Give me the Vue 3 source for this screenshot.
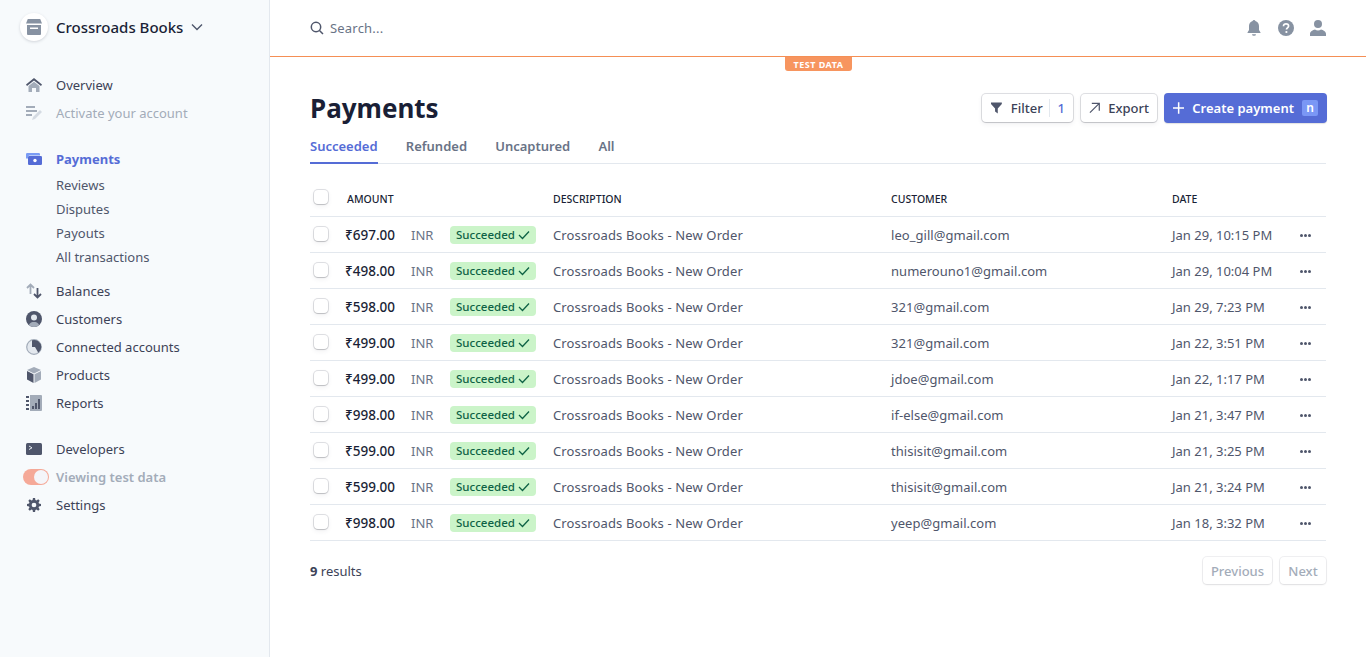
<script setup>
const rows = [
  ['₹697.00', 'leo_gill@gmail.com', 'Jan 29, 10:15 PM'],
  ['₹498.00', 'numerouno1@gmail.com', 'Jan 29, 10:04 PM'],
  ['₹598.00', '321@gmail.com', 'Jan 29, 7:23 PM'],
  ['₹499.00', '321@gmail.com', 'Jan 22, 3:51 PM'],
  ['₹499.00', 'jdoe@gmail.com', 'Jan 22, 1:17 PM'],
  ['₹998.00', 'if-else@gmail.com', 'Jan 21, 3:47 PM'],
  ['₹599.00', 'thisisit@gmail.com', 'Jan 21, 3:25 PM'],
  ['₹599.00', 'thisisit@gmail.com', 'Jan 21, 3:24 PM'],
  ['₹998.00', 'yeep@gmail.com', 'Jan 18, 3:32 PM'],
]
</script>

<template>
  <div class="app">
    <aside class="side">
      <div class="brand">
        <span class="logo">
          <svg width="16" height="16" viewBox="0 0 16 16"><path d="M1.800 0h12.400L16 4.500H0z" fill="#8792a2"/><path d="M1 6h14v9a1 1 0 0 1-1 1H2a1 1 0 0 1-1-1z" fill="#8792a2"/><path d="M4 8.500h8V10H4z" fill="#fff"/></svg>
        </span>
        <span class="brand-name">Crossroads Books</span>
        <svg width="12" height="8" viewBox="0 0 12 8" class="chev"><path d="M1 1.500l5 5 5-5" fill="none" stroke="#4f566b" stroke-width="1.400"/></svg>
      </div>

      <nav class="group g1">
        <div class="item"><span class="ic"><svg width="16" height="16" viewBox="0 0 16 16"><path d="M8 1L0 7.500 1 9l7-5.500L15 9l1-1.500z" fill="#4f566b"/><path d="M2.500 9L8 4.700 13.500 9v6H10v-4H6v4H2.500z" fill="#a3acb9"/></svg></span><span>Overview</span></div>
        <div class="item off"><span class="ic"><svg width="16" height="16" viewBox="0 0 16 16"><path d="M0 1h9v2H0zM0 5h11v2H0zM0 9h6v2H0z" fill="#a3acb9"/><path d="M6 15l1-3 7-7 2 2-7 7z" fill="#d5dbe3"/></svg></span><span>Activate your account</span></div>
      </nav>

      <nav class="group g2">
        <div class="item active"><span class="ic"><svg width="16" height="12" viewBox="0 0 16 12"><path d="M0 1.200Q0 0 1.200 0H12.800Q14 0 14 1.200V2.500H3.500Q2 2.500 2 4V5.500H0z" fill="#7a9cf5"/><path d="M2 4.200Q2 3 3.200 3h11.600Q16 3 16 4.200v6.600Q16 12 14.800 12H3.200Q2 12 2 10.800z" fill="#556cd6"/><circle cx="9" cy="7.500" r="1.700" fill="#fff"/></svg></span><span>Payments</span></div>
        <div class="sub">Reviews</div>
        <div class="sub">Disputes</div>
        <div class="sub">Payouts</div>
        <div class="sub">All transactions</div>
      </nav>

      <nav class="group g3">
        <div class="item"><span class="ic"><svg width="16" height="16" viewBox="0 0 16 16"><path d="M4.500 11V1.500M1 5l3.500-3.500L8 5" fill="none" stroke="#a3acb9" stroke-width="1.800"/><path d="M11.500 5v9.500M8 11l3.500 3.500L15 11" fill="none" stroke="#4f566b" stroke-width="1.800"/></svg></span><span>Balances</span></div>
        <div class="item"><span class="ic"><svg width="16" height="16" viewBox="0 0 16 16"><circle cx="8" cy="8" r="8" fill="#4f566b"/><path d="M2.800 14C4 11.500 6 11 8 11s4 .5 5.200 3A8 8 0 0 1 2.800 14z" fill="#a3acb9"/><circle cx="8" cy="6.500" r="3" fill="#e3e8ee"/></svg></span><span>Customers</span></div>
        <div class="item"><span class="ic"><svg width="16" height="16" viewBox="0 0 16 16"><circle cx="8" cy="8" r="7.300" fill="#e3e8ee" stroke="#a3acb9" stroke-width="1.200"/><path d="M6 1.200A7.300 7.300 0 0 1 15.300 8a7.300 7.300 0 0 1-3 5.800L9 8H6z" fill="#4f566b"/></svg></span><span>Connected accounts</span></div>
        <div class="item"><span class="ic"><svg width="16" height="16" viewBox="0 0 16 16"><path d="M8 0l7 3-7 3.500L1 3z" fill="#a3acb9"/><path d="M1 4l6.500 3.300V16L1 12.500z" fill="#4f566b"/><path d="M15 4L8.500 7.300V16l6.500-3.500z" fill="#a3acb9"/></svg></span><span>Products</span></div>
        <div class="item"><span class="ic"><svg width="16" height="16" viewBox="0 0 16 16"><path d="M4 0h11a1 1 0 0 1 1 1v14a1 1 0 0 1-1 1H4z" fill="#a3acb9"/><path d="M0 1h3v2H0zM0 5h3v2H0zM0 9h3v2H0zM0 13h3v2H0z" fill="#4f566b"/><path d="M6 11h2v3H6zM9 8h2v6H9zM12 4h2v10h-2z" fill="#4f566b"/></svg></span><span>Reports</span></div>
      </nav>

      <nav class="group g4">
        <div class="item"><span class="ic"><svg width="16" height="12" viewBox="0 0 16 12"><rect width="16" height="12" rx="1.500" fill="#4f566b"/><path d="M3 3l3 1.800L3 6.500" fill="none" stroke="#e3e8ee" stroke-width="1"/></svg></span><span>Developers</span></div>
        <div class="item toggle-row"><span class="toggle"><span class="knob"></span></span><span>Viewing test data</span></div>
        <div class="item"><span class="ic"><svg width="14" height="14" viewBox="0 0 16 16"><path fill-rule="evenodd" d="M6.800 0h2.400l.4 2.300 1.300.5 1.900-1.300 1.700 1.700-1.300 1.900.5 1.300 2.300.4v2.400l-2.300.4-.5 1.300 1.300 1.900-1.700 1.700-1.900-1.300-1.300.5-.4 2.300H6.800l-.4-2.300-1.300-.5-1.900 1.300-1.700-1.700 1.300-1.900-.5-1.300L0 9.200V6.800l2.300-.4.500-1.300-1.300-1.900 1.700-1.700 1.900 1.300 1.300-.5zM8 5.300a2.700 2.700 0 1 0 0 5.400 2.700 2.700 0 0 0 0-5.400z" fill="#4f566b"/></svg></span><span>Settings</span></div>
      </nav>
    </aside>

    <div class="content">
      <header class="top">
        <div class="search">
          <svg width="14" height="14" viewBox="0 0 14 14"><circle cx="6" cy="6" r="4.700" fill="none" stroke="#4f566b" stroke-width="1.500"/><path d="M9.500 9.500L13 13" stroke="#4f566b" stroke-width="1.500"/></svg>
          <span>Search...</span>
        </div>
        <div class="top-icons">
          <svg width="16" height="16" viewBox="0 0 16 16"><path d="M8 0a1.500 1.500 0 0 1 1.400 1.100C11.500 1.700 13 3.500 13 6v4l1.500 2.500v.5h-13v-.5L3 10V6c0-2.500 1.500-4.300 3.600-4.900A1.500 1.500 0 0 1 8 0zM6 14.200h4a2 1.600 0 0 1-4 0z" fill="#8792a2"/></svg>
          <svg width="16" height="16" viewBox="0 0 16 16"><circle cx="8" cy="8" r="8" fill="#8792a2"/><path d="M5.500 6.200C5.500 4.700 6.600 3.800 8 3.800s2.600.8 2.600 2.200c0 1.800-2.100 1.900-2.100 3.400" fill="none" stroke="#fff" stroke-width="1.700"/><circle cx="8.400" cy="12" r="1.100" fill="#fff"/></svg>
          <svg width="16" height="16" viewBox="0 0 16 16"><circle cx="8" cy="4" r="4" fill="#8792a2"/><path d="M0 16v-2c0-2.500 3-4 5-4.500 1.500 1.200 4.500 1.200 6 0 2 .5 5 2 5 4.500v2z" fill="#8792a2"/></svg>
        </div>
      </header>
      <div class="test-wrap"><span class="test">TEST DATA</span></div>

      <main class="main">
        <div class="head">
          <h1>Payments</h1>
          <div class="actions">
            <button class="btn filter">
              <svg width="12" height="12" viewBox="0 0 12 12"><path d="M0 0h12v1.500L7.500 6.500V12L4.500 10V6.500L0 1.500z" fill="#4f566b"/></svg>
              <span class="f-label">Filter</span><span class="sep"></span><span class="one">1</span>
            </button>
            <button class="btn export">
              <svg width="12" height="12" viewBox="0 0 12 12"><path d="M1 11L11 1M3 1h8v8" fill="none" stroke="#4f566b" stroke-width="1.300"/></svg>
              <span>Export</span>
            </button>
            <button class="btn create">
              <svg width="12" height="12" viewBox="0 0 12 12"><path d="M6 0v12M0 6h12" stroke="#fff" stroke-width="1.600"/></svg>
              <span class="c-label">Create payment</span><span class="key">n</span>
            </button>
          </div>
        </div>

        <div class="tabs">
          <span class="tab on">Succeeded</span>
          <span class="tab">Refunded</span>
          <span class="tab">Uncaptured</span>
          <span class="tab">All</span>
        </div>

        <div class="row hdr">
          <span class="cb"></span>
          <span class="c-amt hamt">AMOUNT</span>
          <span class="c-cur"></span>
          <span class="c-st"></span>
          <span class="c-desc">DESCRIPTION</span>
          <span class="c-cust">CUSTOMER</span>
          <span class="c-date">DATE</span>
          <span class="c-more"></span>
        </div>
        <div class="row body-row" v-for="(r, i) in rows" :key="i">
          <span class="cb"></span>
          <span class="c-amt amt">{{ r[0] }}</span>
          <span class="c-cur cur">INR</span>
          <span class="c-st"><span class="pill">Succeeded<svg width="12" height="10" viewBox="0 0 12 10"><path d="M1 5l3.500 3.500L11 1.500" fill="none" stroke="#0e6245" stroke-width="1.300"/></svg></span></span>
          <span class="c-desc">Crossroads Books - New Order</span>
          <span class="c-cust">{{ r[1] }}</span>
          <span class="c-date">{{ r[2] }}</span>
          <span class="c-more"><i></i><i></i><i></i></span>
        </div>

        <div class="foot">
          <span class="count"><b>9</b> results</span>
          <div class="pager">
            <button class="btn dis prev">Previous</button>
            <button class="btn dis next">Next</button>
          </div>
        </div>
      </main>
    </div>
  </div>
</template>

<style>
html, body { margin: 0; background: #fff; overflow: hidden; }
</style>

<style scoped>
.app { display: flex; height: 657px; font-family: "Noto Sans", "Open Sans", "Liberation Sans", sans-serif; font-size: 13px; color: #3c4257; }
.side { width: 269px; flex: none; background: #f7fafc; border-right: 1px solid #e3e8ee; padding-top: 13px; }
.brand { display: flex; align-items: center; padding-left: 20px; height: 28px; }
.logo { width: 28px; height: 28px; border-radius: 50%; background: #fff; box-shadow: 0 1px 3px rgba(60,66,87,.2); display: flex; align-items: center; justify-content: center; }
.brand-name { margin-left: 8px; font-size: 15px; font-weight: 500; color: #1a1f36; }
.chev { margin-left: 8px; }
.group { display: flex; flex-direction: column; }
.g1 { margin-top: 30px; }
.g2 { margin-top: 18px; }
.g3 { margin-top: 8px; }
.g4 { margin-top: 18px; }
.item { display: flex; align-items: center; height: 28px; color: #3c4257; }
.ic { width: 16px; margin-left: 26px; margin-right: 14px; display: flex; justify-content: center; }
.off { color: #a3acb9; }
.active { color: #556cd6; font-weight: 700; }
.sub { height: 24px; line-height: 24px; padding-left: 56px; color: #4f566b; }
.toggle-row { color: #a3acb9; font-weight: 600; }
.toggle { width: 26px; height: 16px; margin-left: 23px; margin-right: 7px; border-radius: 8px; background: #f5a998; display: flex; align-items: center; justify-content: flex-end; padding-right: 1px; box-sizing: border-box; }
.knob { width: 14px; height: 14px; border-radius: 50%; background: #f4f5f9; }

.content { flex: 1; min-width: 0; display: flex; flex-direction: column; }
.top { height: 56px; border-bottom: 1px solid #f58f55; display: flex; align-items: center; justify-content: space-between; padding: 0 40px; flex: none; }
.search { display: flex; align-items: center; gap: 6px; color: #697386; letter-spacing: .2px; }
.top-icons { display: flex; gap: 16px; }
.test-wrap { height: 0; position: relative; }
.test { position: absolute; top: 0; left: 515px; width: 67px; height: 14px; background: #f7955f; color: #fff; font-size: 9px; font-weight: 700; line-height: 15px; text-align: center; border-radius: 0 0 3px 3px; letter-spacing: .5px; }

.main { padding: 35px 40px 0 40px; }
.head { display: flex; justify-content: space-between; align-items: center; height: 32px; }
h1 { margin: 0; font-size: 26px; font-weight: 700; color: #1a1f36; line-height: 32px; }
.actions { display: flex; align-items: center; margin-right: -1px; }
.btn { font: inherit; font-weight: 500; display: inline-flex; align-items: center; height: 28px; border: 0; border-radius: 4px; background: #fff; color: #3c4257; box-shadow: 0 0 0 1px rgba(60,66,87,.16), 0 1px 1px rgba(0,0,0,.1), 0 2px 5px rgba(60,66,87,.08); padding: 0 8px; margin: 0; box-sizing: border-box; }
.filter { width: 91px; padding-left: 9px; }
.f-label { margin-left: 9px; }
.sep { width: 1px; height: 18px; background: #e3e8ee; margin-left: 6px; }
.one { color: #556cd6; margin-left: 8px; }
.export { width: 76px; margin-left: 8px; gap: 8px; }
.create { width: 163px; height: 30px; margin-left: 7px; background: #556cd6; color: #fff; font-weight: 600; box-shadow: 0 1px 1px rgba(0,0,0,.12); gap: 8px; padding: 0 9px; }
.c-label { white-space: nowrap; }
.key { width: 16px; height: 16px; flex: none; background: #7a97f5; border-radius: 2px; font-size: 12px; line-height: 16px; text-align: center; margin-left: auto; }

.tabs { display: flex; gap: 28.2px; margin-top: 6px; height: 33px; border-bottom: 1px solid #e3e8ee; font-weight: 600; color: #697386; }
.tab { line-height: 32px; height: 33px; box-sizing: border-box; }
.tab.on { color: #556cd6; border-bottom: 2px solid #556cd6; height: 34px; }

.row { display: flex; align-items: center; height: 35px; border-bottom: 1px solid #e3e8ee; }
.hdr { padding-top: 17px; font-size: 10.5px; font-weight: 500; color: #1a1f36; }
.cb { width: 14px; height: 14px; margin-left: 4px; border-radius: 4px; background: #fff; box-shadow: 0 0 0 1px rgba(60,66,87,.16), 0 1px 1px rgba(0,0,0,.12), 0 2px 5px rgba(60,66,87,.08); flex: none; }
.hdr .cb { margin-bottom: 4px; }
.body-row .cb { margin-bottom: 2px; }
.c-amt { width: 50px; margin-left: 17px; margin-right: 16px; text-align: right; white-space: nowrap; }
.hamt { text-align: left; margin-left: 19px; margin-right: 14px; }
.amt { font-size: 13.500px; font-weight: 500; color: #1a1f36; }
.c-cur { width: 39px; flex: none; }
.cur { color: #697386; }
.c-st { width: 103px; flex: none; }
.pill { display: inline-flex; align-items: center; gap: 3px; width: 86px; height: 18px; box-sizing: border-box; padding-left: 6px; background: #cbf4c9; border-radius: 4px; font-size: 11.500px; font-weight: 500; color: #0e6245; }
.c-desc { width: 338px; flex: none; }
.c-cust { width: 281px; flex: none; }
.body-row .c-desc { letter-spacing: .13px; color: #4f566b; }
.body-row .c-cust { letter-spacing: .04px; color: #4f566b; }
.body-row .c-date { color: #4f566b; }
.c-date { width: 121px; flex: none; white-space: nowrap; }
.c-more { display: flex; gap: 1px; margin-left: 7px; margin-top: 2px; }
.c-more i { width: 3px; height: 3px; border-radius: 50%; background: #4f566b; display: block; }

.foot { display: flex; justify-content: space-between; align-items: center; margin-top: 16px; height: 27px; }
.count b { font-weight: 700; }
.pager { display: flex; gap: 8px; }
.dis { height: 27px; justify-content: center; padding: 0; color: #a3acb9; box-shadow: 0 0 0 1px rgba(60,66,87,.08), 0 1px 2px rgba(0,0,0,.08); }
.prev { width: 69px; }
.next { width: 46px; }
</style>
